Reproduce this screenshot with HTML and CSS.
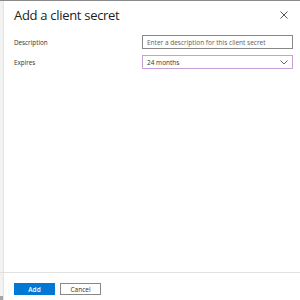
FILE: index.html
```html
<!DOCTYPE html>
<html>
<head>
<meta charset="utf-8">
<link rel="stylesheet" href="styles.css">
</head>
<body>
<div class="frame">
  <div class="edge"><div class="edge-end"></div></div>
  <div class="panel">
    <div class="header">
      <h1 class="title">Add a client secret</h1>
      <svg class="close" width="8" height="8" viewBox="0 0 8 8"><path d="M0.5 0.5 L7.5 7.5 M7.5 0.5 L0.5 7.5" stroke="#444" stroke-width="0.9" fill="none"/></svg>
    </div>
    <div class="form">
      <div class="row">
        <label class="label">Description</label>
        <div class="input">Enter a description for this client secret</div>
      </div>
      <div class="row">
        <label class="label">Expires</label>
        <div class="input select"><span>24 months</span>
          <svg width="8" height="5" viewBox="0 0 8 5"><path d="M0.5 0.5 L4 4 L7.5 0.5" stroke="#555" stroke-width="0.9" fill="none"/></svg>
        </div>
      </div>
    </div>
    <div class="footer">
      <button class="btn primary">Add</button>
      <button class="btn">Cancel</button>
    </div>
  </div>
</div>
</body>
</html>
```
FILE: styles.css
```css
html, body { margin: 0; padding: 0; }
body {
  width: 300px;
  height: 300px;
  overflow: hidden;
  font-family: "Open Sans", "Noto Sans", sans-serif;
  color: #323130;
  background: #fff;
}
.frame {
  display: flex;
  height: 299px;
  border-top: 1px solid #8a8a8a;
}
.edge {
  width: 3px;
  background: #f2f2f2;
  border-right: 1px solid #e3e3e3;
  display: flex;
  flex-direction: column;
  justify-content: flex-end;
}
.edge-end { height: 4px; background: #a6a6a6; }
.panel {
  flex: 1;
  display: flex;
  flex-direction: column;
}
.header {
  display: flex;
  justify-content: space-between;
  align-items: center;
  padding: 3px 12px 0 10px;
  height: 22px;
}
.title {
  margin: 0;
  font-size: 13px;
  letter-spacing: -0.3px;
  font-weight: 400;
  color: #201f1e;
}
.close { margin-top: 0; }
.form {
  flex: 1;
  padding: 9px 7px 0 10px;
  display: flex;
  flex-direction: column;
  gap: 6px;
}
.row {
  display: flex;
  align-items: center;
  justify-content: space-between;
}
.label { font-size: 6.3px; color: #323130; }
.input {
  box-sizing: border-box;
  width: 151px;
  height: 14px;
  border: 1px solid #8a8886;
  font-size: 6.5px;
  color: #605e5c;
  padding: 0 4px;
  display: flex;
  align-items: center;
  justify-content: space-between;
}
.select {
  border-color: #c89fd8;
  color: #323130;
}
.footer {
  border-top: 1px solid #e1e1e1;
  margin-left: -4px;
  padding: 10px 0 5px 14px;
  display: flex;
  gap: 5px;
}
.btn {
  box-sizing: border-box;
  width: 41px;
  height: 12px;
  font-family: inherit;
  font-size: 6.5px;
  padding: 0;
  border: 1px solid #8a8886;
  background: #fff;
  color: #323130;
}
.primary {
  background: #0078d4;
  border-color: #0078d4;
  color: #fff;
  font-weight: 600;
}
```
